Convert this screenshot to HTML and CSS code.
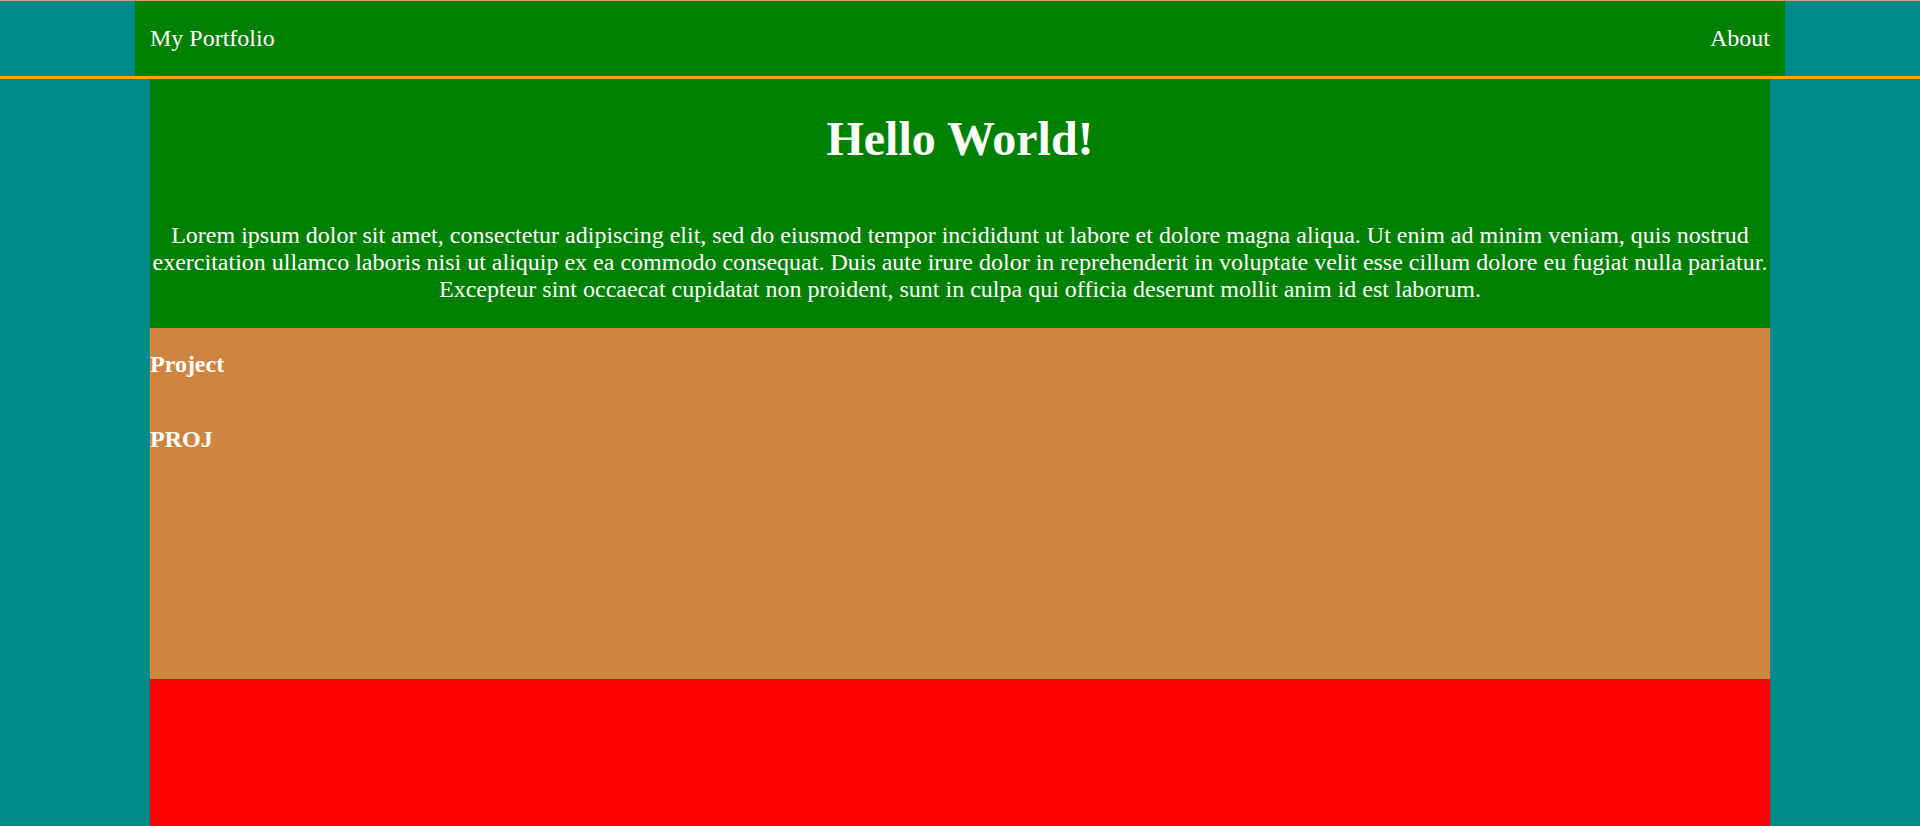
FILE: index.html
```html
<!DOCTYPE html>
<html lang="en">
<head>
<meta charset="utf-8">
<title>My Portfolio</title>
<link rel="stylesheet" href="styles.css">
</head>
<body>
<div class="topbar">
  <nav class="nav">
    <span class="brand">My Portfolio</span>
    <span class="link">About</span>
  </nav>
</div>
<main class="main">
  <section class="intro">
    <h1 class="title">Hello World!</h1>
    <p class="lead">Lorem ipsum dolor sit amet, consectetur adipiscing elit, sed do eiusmod tempor incididunt ut labore et dolore magna aliqua. Ut enim ad minim veniam, quis nostrud exercitation ullamco laboris nisi ut aliquip ex ea commodo consequat. Duis aute irure dolor in reprehenderit in voluptate velit esse cillum dolore eu fugiat nulla pariatur. Excepteur sint occaecat cupidatat non proident, sunt in culpa qui officia deserunt mollit anim id est laborum.</p>
  </section>
  <section class="projects">
    <h3 class="proj-title">Project</h3>
    <h3 class="proj-item">PROJ</h3>
  </section>
  <section class="footer"></section>
</main>
</body>
</html>
```
FILE: styles.css
```css
html, body {
  margin: 0;
  padding: 0;
}
body {
  background: #008b8b;
  border-top: 1px solid #d2a677;
  font-family: "Liberation Serif", "Times New Roman", serif;
  color: #ffffff;
}
.topbar {
  border-bottom: 3px solid #ffa500;
}
.nav {
  width: 1650px;
  height: 75px;
  margin: 0 auto;
  padding: 0 15px;
  box-sizing: border-box;
  background: #008000;
  display: flex;
  justify-content: space-between;
  align-items: center;
  font-size: 24px;
}
.main {
  width: 1620px;
  margin: 0 auto;
}
.intro {
  background: #008000;
  text-align: center;
  padding: 32px 0 25px;
}
.title {
  margin: 0 0 56px;
  font-size: 48px;
  font-weight: bold;
  line-height: normal;
}
.lead {
  margin: 0;
  font-size: 24px;
  line-height: normal;
}
.projects {
  background: #cd853f;
  height: 351px;
  box-sizing: border-box;
  padding-top: 23px;
  border-left: 1px solid #e08a30;
}
.proj-title,
.proj-item {
  margin: 0 0 48px -1px;
  font-size: 24px;
  font-weight: bold;
  line-height: normal;
}
.footer {
  background: #ff0000;
  height: 300px;
}
```
